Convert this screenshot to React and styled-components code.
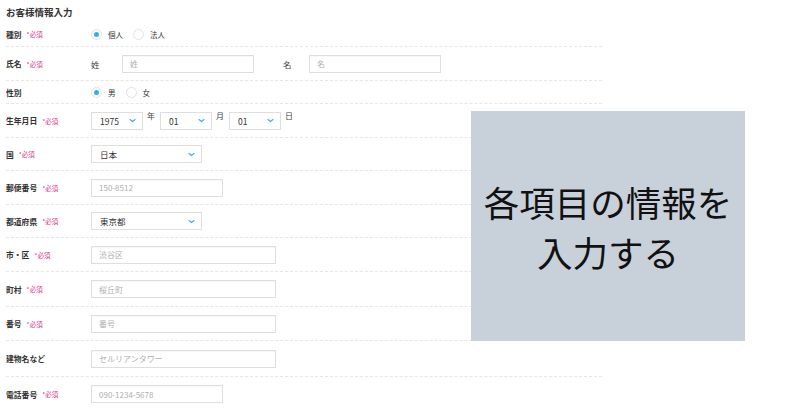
import React from "react";
import styled, { createGlobalStyle } from "styled-components";

const Global = createGlobalStyle`
  html, body { margin: 0; padding: 0; background: #fff; }
  body { font-family: "Noto Sans CJK JP", "Noto Sans", sans-serif; color: #333; }
  * { box-sizing: border-box; }
`;

const Page = styled.div`
  position: relative;
  width: 800px;
  height: 419px;
  overflow: hidden;
  padding: 6px 0 0 6px;
`;

const Title = styled.h2`
  margin: 0;
  height: 16px;
  font-size: 9.5px;
  font-weight: 700;
  line-height: 12px;
  color: #333;
`;

const Form = styled.div`
  width: 596px;
`;

const Row = styled.div`
  display: flex;
  align-items: center;
  height: ${(p) => p.$h}px;
  border-bottom: ${(p) => (p.$last ? "none" : "1px dashed #e6e6e6")};
`;

const LabelCell = styled.div`
  width: 85px;
  flex: none;
  display: flex;
  align-items: center;
  gap: 5px;
`;

const Label = styled.span`
  font-size: 7.8px;
  font-weight: 700;
  color: #333;
`;

const Req = styled.span`
  font-size: 6.5px;
  color: #e0348a;
`;

const Field = styled.div`
  display: flex;
  align-items: center;
  flex: 1;
`;

const RadioItem = styled.label`
  display: flex;
  align-items: center;
  gap: 6px;
  margin-right: 10px;
  font-size: 7.5px;
  color: #333;
`;

const RadioCircle = styled.span`
  width: 11px;
  height: 11px;
  border-radius: 50%;
  border: 1px solid #e2e2e2;
  background: #fff;
  display: flex;
  align-items: center;
  justify-content: center;
  &::after {
    content: "";
    width: 5px;
    height: 5px;
    border-radius: 50%;
    background: ${(p) => (p.$on ? "#2fb2e4" : "transparent")};
  }
`;

const Input = styled.div`
  width: ${(p) => p.$w}px;
  height: 18px;
  border: 1px solid #dedede;
  box-shadow: inset 0 1px 1px rgba(0,0,0,0.03);
  display: flex;
  align-items: center;
  padding-left: 7px;
  font-size: 8px;
  color: #b0b0b0;
  flex: none;
`;

const Select = styled.div`
  width: ${(p) => p.$w}px;
  height: 18px;
  border: 1px solid #dedede;
  display: flex;
  align-items: center;
  justify-content: space-between;
  padding: 0 6px 0 8px;
  font-size: 8.5px;
  color: #333;
  flex: none;
`;

const Unit = styled.span`
  font-size: 8px;
  color: #444;
  align-self: flex-start;
  margin: -2px ${(p) => p.$mr || 0}px 0 4px;
`;

const SideLabel = styled.span`
  font-size: 8.5px;
  color: #444;
  width: ${(p) => p.$w}px;
  padding-left: ${(p) => p.$pl || 0}px;
  flex: none;
`;

const Overlay = styled.div`
  position: absolute;
  left: 471px;
  top: 111px;
  width: 274px;
  height: 230px;
  background: #c8d0da;
  display: flex;
  align-items: center;
  justify-content: center;
  text-align: center;
  font-family: "Noto Sans CJK JP", sans-serif;
  font-size: 35.5px;
  line-height: 50px;
  color: #111;
  padding-top: 2px;
`;

const Chevron = () => (
  <svg width="7" height="5" viewBox="0 0 7 5">
    <path d="M1 1.5 L3.5 3.5 L6 1.5" fill="none" stroke="#35b3e3" strokeWidth="1.2" strokeLinecap="round" />
  </svg>
);

const Radio = ({ on, children }) => (
  <RadioItem>
    <RadioCircle $on={on} />
    {children}
  </RadioItem>
);

const FieldLabel = ({ text, req }) => (
  <LabelCell>
    <Label>{text}</Label>
    {req && <Req>*必須</Req>}
  </LabelCell>
);

export default function App() {
  return (
    <>
      <Global />
      <Page>
        <Title>お客様情報入力</Title>
        <Form>
          <Row $h={25}>
            <FieldLabel text="種別" req />
            <Field>
              <Radio on>個人</Radio>
              <Radio>法人</Radio>
            </Field>
          </Row>
          <Row $h={34}>
            <FieldLabel text="氏名" req />
            <Field>
              <SideLabel $w={31}>姓</SideLabel>
              <Input $w={132}>姓</Input>
              <SideLabel $w={55} $pl={29}>名</SideLabel>
              <Input $w={132}>名</Input>
            </Field>
          </Row>
          <Row $h={23}>
            <FieldLabel text="性別" />
            <Field>
              <Radio on>男</Radio>
              <Radio>女</Radio>
            </Field>
          </Row>
          <Row $h={34}>
            <FieldLabel text="生年月日" req />
            <Field>
              <Select $w={52}>1975<Chevron /></Select>
              <Unit $mr={5}>年</Unit>
              <Select $w={52}>01<Chevron /></Select>
              <Unit $mr={5}>月</Unit>
              <Select $w={52}>01<Chevron /></Select>
              <Unit>日</Unit>
            </Field>
          </Row>
          <Row $h={33}>
            <FieldLabel text="国" req />
            <Field>
              <Select $w={111}>日本<Chevron /></Select>
            </Field>
          </Row>
          <Row $h={34}>
            <FieldLabel text="郵便番号" req />
            <Field>
              <Input $w={132}>150-8512</Input>
            </Field>
          </Row>
          <Row $h={33}>
            <FieldLabel text="都道府県" req />
            <Field>
              <Select $w={111}>東京都<Chevron /></Select>
            </Field>
          </Row>
          <Row $h={34}>
            <FieldLabel text="市・区" req />
            <Field>
              <Input $w={185}>渋谷区</Input>
            </Field>
          </Row>
          <Row $h={35}>
            <FieldLabel text="町村" req />
            <Field>
              <Input $w={185}>桜丘町</Input>
            </Field>
          </Row>
          <Row $h={34}>
            <FieldLabel text="番号" req />
            <Field>
              <Input $w={185}>番号</Input>
            </Field>
          </Row>
          <Row $h={36}>
            <FieldLabel text="建物名など" />
            <Field>
              <Input $w={185}>セルリアンタワー</Input>
            </Field>
          </Row>
          <Row $h={34} $last>
            <FieldLabel text="電話番号" req />
            <Field>
              <Input $w={132}>090-1234-5678</Input>
            </Field>
          </Row>
        </Form>
        <Overlay>
          各項目の情報を
          <br />
          入力する
        </Overlay>
      </Page>
    </>
  );
}
